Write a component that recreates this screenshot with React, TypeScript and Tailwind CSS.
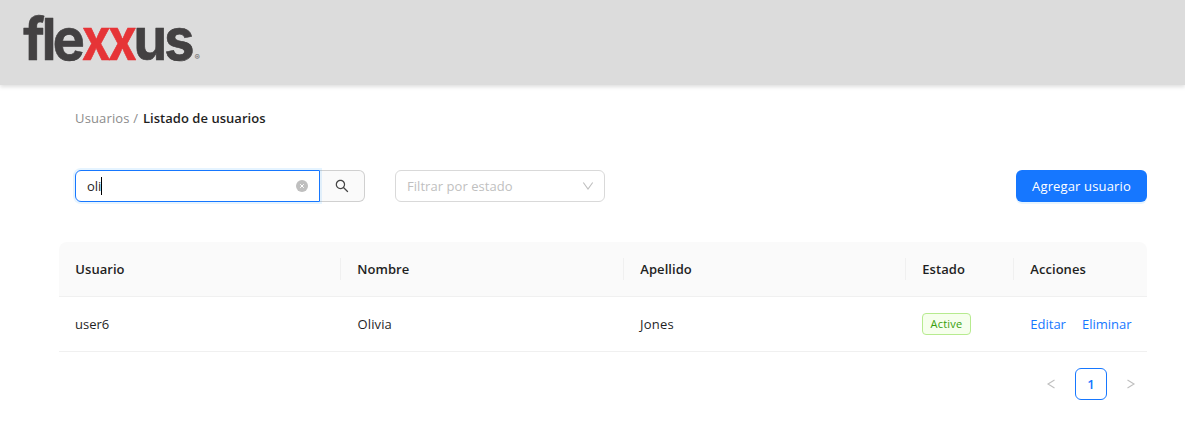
import React from 'react';

const columns = ['Usuario', 'Nombre', 'Apellido', 'Estado', 'Acciones'];
const grid = 'grid grid-cols-[282px_283px_282px_108px_133px]';

function Logo() {
  return (
    <svg width="220" height="85" viewBox="0 0 220 85" className="block" role="img" aria-label="flexxus">
      <g
        fontFamily="Inter, 'Liberation Sans', sans-serif"
        fontWeight="700"
        fontSize="58"
        fill="#434142"
        stroke="#434142"
        strokeWidth="0.6"
        strokeLinejoin="round"
      >
        <text transform="translate(0 59.7) scale(0.93 1)" x="25 45 56.7">fle</text>
        <text transform="translate(81.7 59.7) scale(0.86 1)" x="0 30.5" fill="#e63437" stroke="#e63437">xx</text>
        <text transform="translate(133.6 59.7) scale(0.93 1)" x="0 33">us</text>
      </g>
      <text x="194.5" y="60" fontSize="8" fontFamily="Inter, sans-serif" fill="#666">®</text>
    </svg>
  );
}

function SearchIcon() {
  return (
    <svg width="16" height="16" viewBox="0 0 1024 1024" fill="#444">
      <path d="M909.6 854.5L649.9 594.8C690.2 542.7 712 479 712 412c0-80.2-31.3-155.4-87.9-212.1-56.6-56.7-132-87.9-212.1-87.9s-155.5 31.3-212.1 87.9C143.2 256.5 112 331.8 112 412c0 80.1 31.3 155.5 87.9 212.1C256.5 680.8 331.8 712 412 712c67 0 130.6-21.8 182.7-62l259.7 259.6a8.2 8.2 0 0 0 11.6 0l43.6-43.5a8.2 8.2 0 0 0 0-11.6zM570.4 570.4C528 612.7 471.8 636 412 636s-116-23.3-158.4-65.6C211.3 528 188 471.8 188 412s23.3-116.1 65.6-158.4C296 211.3 352.2 188 412 188s116.1 23.2 158.4 65.6S636 352.2 636 412s-23.3 116.1-65.6 158.4z" />
    </svg>
  );
}

function ClearIcon() {
  return (
    <svg width="12" height="12" viewBox="0 0 12 12">
      <circle cx="6" cy="6" r="6" fill="#bfbfbf" />
      <path d="M4.2 4.2 7.8 7.8M7.8 4.2 4.2 7.8" stroke="white" strokeWidth="1" />
    </svg>
  );
}

function Chevron({ d }: { d: string }) {
  return (
    <svg width="12" height="12" viewBox="0 0 12 12" fill="none" stroke="#bfbfbf" strokeWidth="1.1">
      <path d={d} />
    </svg>
  );
}

export default function App() {
  return (
    <div className="flex h-[446px] w-full flex-col bg-white font-['Open_Sans','Noto_Sans',sans-serif] text-[13px] leading-[22px] text-[#1f1f1f]">
      <header className="h-[85px] shrink-0 bg-[#dcdcdc] shadow-[0_2px_4px_rgba(0,0,0,0.13)]">
        <Logo />
      </header>
      <main className="ml-[59px] w-[1088px] pt-[22px]">
        <nav className="flex pl-4 font-semibold">
          <span className="w-[68px] whitespace-pre font-medium tracking-[0.15px] text-[#8c8c8c]">Usuarios / </span>
          <span className="tracking-[0.03px]">Listado de usuarios</span>
        </nav>

        <div className="mt-[41px] flex h-8 items-stretch pl-4">
          <div className="z-10 flex w-[245px] items-center rounded-l-md border border-[#1677ff] px-[11px] shadow-[0_0_0_2px_rgba(5,145,255,0.1)]">
            <span>oli</span>
            <span className="h-[18px] w-px bg-black" />
            <span className="ml-auto"><ClearIcon /></span>
          </div>
          <button className="flex w-[45px] items-center justify-center rounded-r-md border border-l-0 border-[#d0d0d0] bg-[#fafafa]">
            <SearchIcon />
          </button>
          <div className="ml-[30px] flex w-[210px] items-center justify-between rounded-md border border-[#d9d9d9] pl-[11px] pr-2.5 text-[#bfbfbf]">
            <span className="tracking-[0.05px]">Filtrar por estado</span>
            <Chevron d="M1.3 2.5 6 9 10.7 2.5" />
          </div>
          <button className="ml-auto w-[131px] rounded-md bg-[#1677ff] tracking-[0.15px] text-white shadow-[0_2px_0_rgba(5,145,255,0.1)]">
            Agregar usuario
          </button>
        </div>

        <div className="mt-10">
          <div className={`${grid} h-[55px] items-center rounded-t-lg border-b border-[#f0f0f0] bg-[#fafafa] font-semibold`}>
            {columns.map((c, i) => (
              <div key={c} className={`flex h-[22px] items-center pl-[16.3px] tracking-[0.05px] ${i < 4 ? 'border-r border-[#f0f0f0]' : ''}`}>
                {c}
              </div>
            ))}
          </div>
          <div className={`${grid} h-[55px] items-center border-b border-[#f0f0f0]`}>
            <div className="pl-4">user6</div>
            <div className="pl-[16.5px] tracking-[0.12px]">Olivia</div>
            <div className="pl-4 tracking-[0.2px]">Jones</div>
            <div className="flex pl-4">
              <span className="flex h-[22px] w-[49px] items-center justify-center rounded border border-[#b7eb8f] bg-[#f6ffed] text-[11px] tracking-[0.2px] text-[#389e0d]">
                Active
              </span>
            </div>
            <div className="flex gap-4 pl-[16.3px] text-[#1677ff]">
              <a>Editar</a>
              <a>Eliminar</a>
            </div>
          </div>
          <div className="mt-4 flex h-8 justify-end gap-2">
            <span className="flex w-8 items-center justify-center"><Chevron d="M9.5 2 3 6 9.5 10" /></span>
            <span className="flex w-8 items-center justify-center rounded-md border border-[#1677ff] font-semibold text-[#1677ff]">1</span>
            <span className="flex w-8 items-center justify-center"><Chevron d="M2.5 2 9 6 2.5 10" /></span>
          </div>
        </div>
      </main>
    </div>
  );
}
